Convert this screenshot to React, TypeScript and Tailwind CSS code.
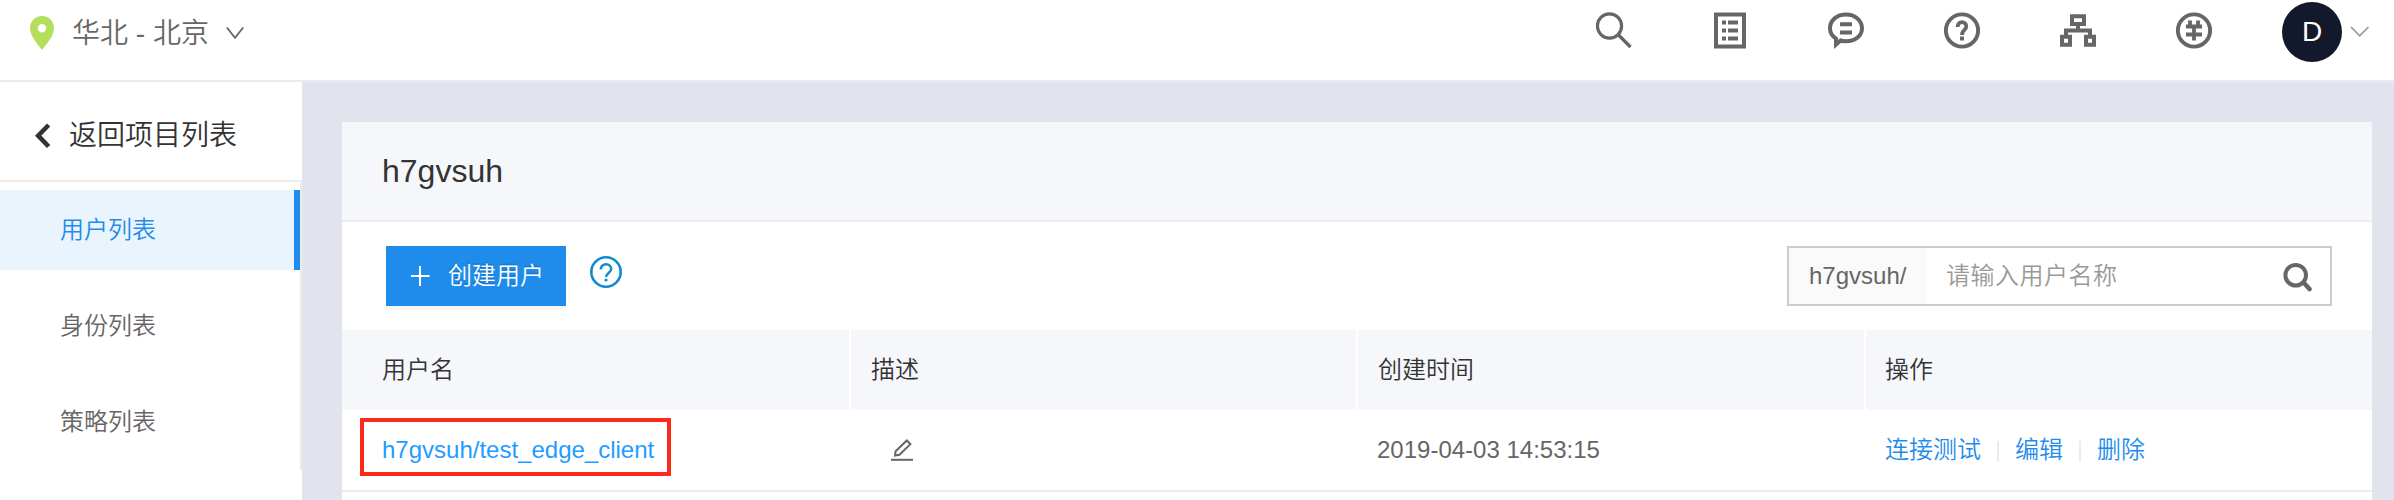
import React from "react";

const navItems = ["用户列表", "身份列表", "策略列表"];

function PinIcon() {
  return (
    <svg width="24" height="34" viewBox="0 0 24 34" className="block">
      <path
        fillRule="evenodd"
        fill="#b3df5b"
        d="M12 0C5.2 0 0 5.2 0 12c0 8 7.5 16 12 22 4.500-6 12-14 12-22C24 5.200 18.800 0 12 0Zm0 8a4.200 4.200 0 1 1 0 8.400A4.200 4.200 0 0 1 12 8Z"
      />
    </svg>
  );
}

function HeaderIcons() {
  return (
    <div className="flex gap-[80px] pt-[12px] text-[#666]">
      <svg width="36" height="37" viewBox="0 0 36 37" fill="none" stroke="currentColor">
        <circle cx="13.500" cy="14" r="12.100" strokeWidth="3.200" />
        <path d="M22.500 23 34.500 35" strokeWidth="3.400" />
      </svg>
      <svg width="36" height="37" viewBox="0 0 36 37" fill="none" stroke="currentColor">
        <path d="M4 2.500h28v32H4Z" strokeWidth="4" />
        <path d="M10 10.500h4M10 18.500h4M10 26.500h4M16 10.500h10M16 18.500h10M16 26.500h10" strokeWidth="4" />
      </svg>
      <svg width="36" height="37" viewBox="0 0 36 37" fill="none" stroke="currentColor">
        <path
          d="M18 2.500c-9 0-16 5.700-16 13.700 0 4.600 2.300 8 6 10.500v5.800l4.600-4c1.700.500 3.500.800 5.400.800 9 0 16-5.300 16-13.100S27 2.500 18 2.500Z"
          strokeWidth="4"
        />
        <path d="M12 12.300h12M12 20.500h12" strokeWidth="4" />
      </svg>
      <svg width="36" height="37" viewBox="0 0 36 37" fill="none" stroke="currentColor">
        <circle cx="18" cy="18.500" r="16.100" strokeWidth="3.900" />
        <path d="M13.700 15v-.5a4.300 4.300 0 1 1 8.600 0c0 3.500-4.300 3.600-4.300 8.500" strokeWidth="3.800" />
        <path d="M16 24.500h4v4h-4Z" fill="currentColor" stroke="none" />
      </svg>
      <svg width="36" height="37" viewBox="0 0 36 37" fill="none" stroke="currentColor">
        <path d="M12 4.300h12v7.700H12ZM2 24.700h8v8H2ZM26 24.700h8v8h-8Z" strokeWidth="4" />
        <path d="M18 13v5M6 23v-4.500h24V23" strokeWidth="4" />
      </svg>
      <svg width="36" height="37" viewBox="0 0 36 37" fill="none" stroke="currentColor">
        <circle cx="18" cy="18.500" r="16.100" strokeWidth="3.900" />
        <path d="M14 8.500v5M22 8.500v5M18 13v15.500M10 14.500h16M10 22.500h16" strokeWidth="3.800" />
      </svg>
    </div>
  );
}

function TopBar() {
  return (
    <header className="flex h-[82px] shrink-0 items-start justify-between border-b-2 border-[#e8ebf0] bg-white pr-[24px] pl-[30px]">
      <div className="flex items-start">
        <div className="pt-[16px]">
          <PinIcon />
        </div>
        <span className="ml-[18px] pt-[14px] text-[28px] leading-[40px] text-[#666]">华北 - 北京</span>
        <svg width="18" height="12" viewBox="0 0 18 12" className="mt-[27px] ml-[17px]" fill="none" stroke="#666" strokeWidth="1.800">
          <path d="M.8.500 9 10.800 17.200.500" />
        </svg>
      </div>
      <div className="flex items-start">
        <HeaderIcons />
        <div className="mt-[2px] ml-[70px] flex size-[60px] items-center justify-center rounded-full bg-[#12192b] text-[28px] text-white">
          D
        </div>
        <svg width="20" height="12" viewBox="0 0 20 12" className="mt-[26px] ml-[8px]" fill="none" stroke="#999" strokeWidth="1.700">
          <path d="M1 1l8.700 8.800L18.500 1" />
        </svg>
      </div>
    </header>
  );
}

function Sidebar() {
  return (
    <aside className="w-[302px] shrink-0 bg-white">
      <div className="flex h-[100px] items-center border-b-2 border-[#ededed] pt-[10px] pl-[35px] text-[28px] text-[#333]">
        <svg width="16" height="26" viewBox="0 0 16 26" fill="none" stroke="currentColor" strokeWidth="4.600">
          <path d="M13.600 2 3.200 12.700 13.600 23.500" />
        </svg>
        <span className="ml-[18px]">返回项目列表</span>
      </div>
      <nav className="flex h-[288px] flex-col gap-[16px] border-r-2 border-[#ebebeb] pt-[8px]">
        {navItems.map((item, i) => (
          <a
            key={item}
            className={
              i === 0
                ? "flex h-[80px] items-center border-r-[6px] border-[#1f8ceb] bg-[#e9f4fd] pl-[60px] text-[#1f8ceb]"
                : "flex h-[80px] items-center pl-[60px] text-[#666]"
            }
          >
            {item}
          </a>
        ))}
      </nav>
    </aside>
  );
}

function Toolbar() {
  return (
    <div className="flex h-[108px] items-start justify-between pt-[24px] pr-[40px] pl-[44px]">
      <div className="flex items-start">
        <button className="flex h-[60px] w-[180px] items-center bg-[#1f8ceb] pl-[25px] text-white shadow-[0_4px_0_#f7f7f7] [text-shadow:0_-2px_0_rgba(0,0,0,0.12)]">
          <svg width="19" height="20" viewBox="0 0 19 20" fill="none" stroke="currentColor" strokeWidth="2">
            <path d="M9 0v20M0 10h18.500" />
          </svg>
          <span className="ml-[18px]">创建用户</span>
        </button>
        <svg width="32" height="32" viewBox="0 0 32 32" className="mt-[10px] ml-[24px]" fill="none" stroke="#108cce">
          <circle cx="16" cy="16" r="14.700" strokeWidth="2.600" />
          <path d="M10.800 13.600v-.5a5.200 4.900 0 1 1 10.400 0c0 3.900-5.200 3.700-5.200 7.900" strokeWidth="2.500" />
          <circle cx="16" cy="24" r="1.600" fill="#108cce" stroke="none" />
        </svg>
      </div>
      <div className="flex h-[60px] w-[545px] border-2 border-[#ccc] bg-white">
        <span className="flex w-[138px] items-center bg-[#fafafa] pl-[20px] text-[#666]">h7gvsuh/</span>
        <span className="flex flex-1 items-center pl-[19px] tracking-[0.5px] text-[#999]">请输入用户名称</span>
        <svg width="30" height="30" viewBox="0 0 30 30" className="mt-[14px] mr-[17px]" fill="none" stroke="#666">
          <circle cx="12.700" cy="13.200" r="10.300" strokeWidth="4" />
          <path d="M20.500 20.500 26.500 27" strokeWidth="4.600" strokeLinecap="round" />
        </svg>
      </div>
    </div>
  );
}

function UserTable() {
  return (
    <div>
      <div className="grid h-[80px] grid-cols-[509px_507px_508px_506px] bg-[#f6f7fb] text-[#333]">
        <div className="flex items-center border-r-2 border-white pl-[40px]">用户名</div>
        <div className="flex items-center border-r-2 border-white pl-[20px]">描述</div>
        <div className="flex items-center border-r-2 border-white pl-[20px]">创建时间</div>
        <div className="flex items-center pl-[19px]">操作</div>
      </div>
      <div className="grid h-[82px] grid-cols-[509px_507px_508px_506px] border-b-2 border-[#ebebeb] text-[#666]">
        <div className="flex items-start pt-[8px] pl-[18px]">
          <a className="flex h-[58px] w-[311px] items-center border-4 border-[#ff2a1c] pt-[5px] pl-[18px] text-[#1f9cff]">
            h7gvsuh/test_edge_client
          </a>
        </div>
        <div className="flex items-start pt-[29px] pl-[40px]">
          <svg width="23" height="23" viewBox="0 0 23 23" fill="none" stroke="#666" strokeWidth="2">
            <path d="M0 20.800h22" />
            <path d="M15.800 1.500 19.400 5.100 8.500 15.800 4 16.600 4.600 12.300Z" />
          </svg>
        </div>
        <div className="flex items-center pl-[19px]">2019-04-03 14:53:15</div>
        <div className="flex items-center pl-[19px] text-[#1f8ceb]">
          <a>连接测试</a>
          <i className="mt-[3px] mr-[16px] ml-[16px] h-[21px] w-[2px] bg-[#ebebeb]" />
          <a>编辑</a>
          <i className="mt-[3px] mr-[16px] ml-[16px] h-[21px] w-[2px] bg-[#ebebeb]" />
          <a>删除</a>
        </div>
      </div>
    </div>
  );
}

export default function App() {
  return (
    <div className="flex h-[500px] w-[2394px] flex-col overflow-hidden bg-[#e1e4ed] font-['Liberation_Sans','Noto_Sans_CJK_SC',sans-serif] text-[24px] leading-[36px] font-[350]">
      <TopBar />
      <div className="flex min-h-0 flex-1">
        <Sidebar />
        <main className="min-w-0 flex-1 pt-[40px] pr-[22px] pl-[40px]">
          <section className="h-full bg-white">
            <h1 className="flex h-[100px] items-center border-b-2 border-[#ededed] bg-[#f6f7fb] pl-[40px] text-[32px] text-[#333]">
              h7gvsuh
            </h1>
            <Toolbar />
            <UserTable />
          </section>
        </main>
      </div>
    </div>
  );
}
